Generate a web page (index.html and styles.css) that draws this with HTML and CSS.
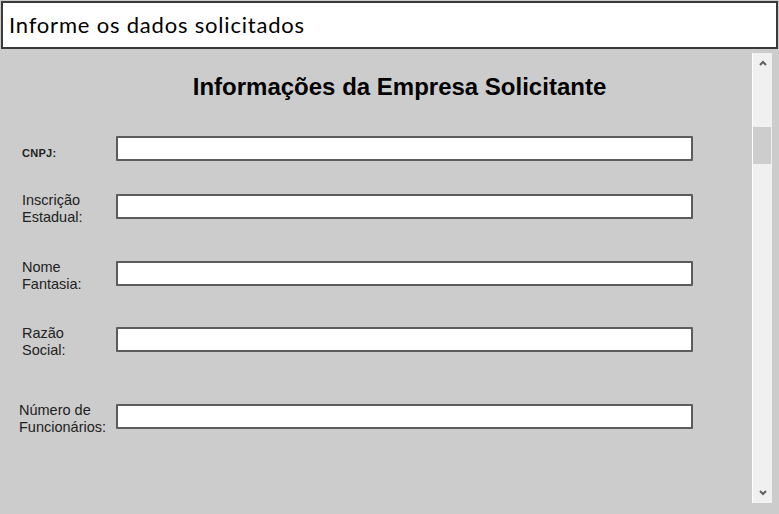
FILE: index.html
```html
<!DOCTYPE html>
<html lang="pt">
<head>
<meta charset="utf-8">
<title>Informe os dados solicitados</title>
<link rel="stylesheet" href="styles.css">
</head>
<body>
<header class="header">Informe os dados solicitados</header>
<div class="main">
  <section class="content">
    <h1 class="title">Informações da Empresa Solicitante</h1>
    <form class="form">
      <div class="row row-first">
        <label class="label label-bold" for="cnpj">CNPJ:</label>
        <input class="field" id="cnpj" type="text">
      </div>
      <div class="row row-second">
        <label class="label" for="ie">Inscrição<br>Estadual:</label>
        <input class="field" id="ie" type="text">
      </div>
      <div class="row row-third">
        <label class="label" for="nf">Nome<br>Fantasia:</label>
        <input class="field" id="nf" type="text">
      </div>
      <div class="row row-fourth">
        <label class="label" for="rs">Razão<br>Social:</label>
        <input class="field" id="rs" type="text">
      </div>
      <div class="row row-fifth">
        <label class="label label-wide" for="nfunc">Número de<br>Funcionários:</label>
        <input class="field" id="nfunc" type="text">
      </div>
    </form>
  </section>
  <div class="scrollbar">
    <div class="sb-btn sb-up">
      <svg width="8" height="6" viewBox="0 0 8 6"><path d="M1 5 L4 2 L7 5" fill="none" stroke="#606060" stroke-width="2"/></svg>
    </div>
    <div class="sb-thumb"></div>
    <div class="sb-spacer"></div>
    <div class="sb-btn sb-down">
      <svg width="8" height="6" viewBox="0 0 8 6"><path d="M1 1 L4 4 L7 1" fill="none" stroke="#606060" stroke-width="2"/></svg>
    </div>
  </div>
</div>
</body>
</html>
```
FILE: styles.css
```css
* { box-sizing: border-box; }

html, body {
  margin: 0;
  height: 514px;
  overflow: hidden;
}

body {
  background: #cccccc;
  font-family: "Liberation Sans", Arial, sans-serif;
  color: #1a1a1a;
}

.header {
  height: 48px;
  margin: 1px 1px 0 1px;
  border: 2px solid #3a3a3a;
  background: #ffffff;
  display: flex;
  align-items: center;
  padding-left: 6px;
  padding-bottom: 2px;
  font-family: "Comic Sans MS", "Lato", sans-serif;
  font-size: 22px;
  letter-spacing: 0.8px;
  color: #000;
}

.main {
  display: flex;
  height: 465px;
}

.content {
  flex: 1;
}

.title {
  margin: 25px 0 0 0;
  padding-left: 47px;
  text-align: center;
  font-size: 24px;
  line-height: 26px;
  font-weight: bold;
  color: #000;
}

.form {
  display: flex;
  flex-direction: column;
}

.row {
  display: grid;
  grid-template-columns: 116px 577px;
  align-items: center;
  height: 39px;
}

.row-first { margin-top: 29px; }
.row-second { margin-top: 19px; }
.row-third { margin-top: 28px; }
.row-fourth { margin-top: 27px; }
.row-fifth { margin-top: 38px; }

.label {
  padding-left: 22px;
  padding-top: 5px;
  font-size: 14.5px;
  line-height: 17px;
  color: #222;
}

.label-bold {
  font-size: 11px;
  font-weight: bold;
  padding-top: 9px;
  letter-spacing: 0.3px;
}

.label-wide {
  padding-left: 19px;
}

.field {
  width: 577px;
  height: 25px;
  margin: 0;
  border: 2px solid #5c5c5c;
  border-radius: 1px;
  background: #ffffff;
}

.scrollbar {
  width: 20px;
  margin: 4px 7px 11px 0;
  background: #f0f0f0;
  border-left: 1px solid #ffffff;
  display: flex;
  flex-direction: column;
}

.sb-btn {
  height: 17px;
  display: flex;
  justify-content: center;
  align-items: center;
}

.sb-up { padding-top: 3px; }
.sb-down { padding-bottom: 3px; }

.sb-thumb {
  margin: 57px 1px 0 0;
  height: 37px;
  background: #cdcdcd;
}

.sb-spacer { flex: 1; }
```
